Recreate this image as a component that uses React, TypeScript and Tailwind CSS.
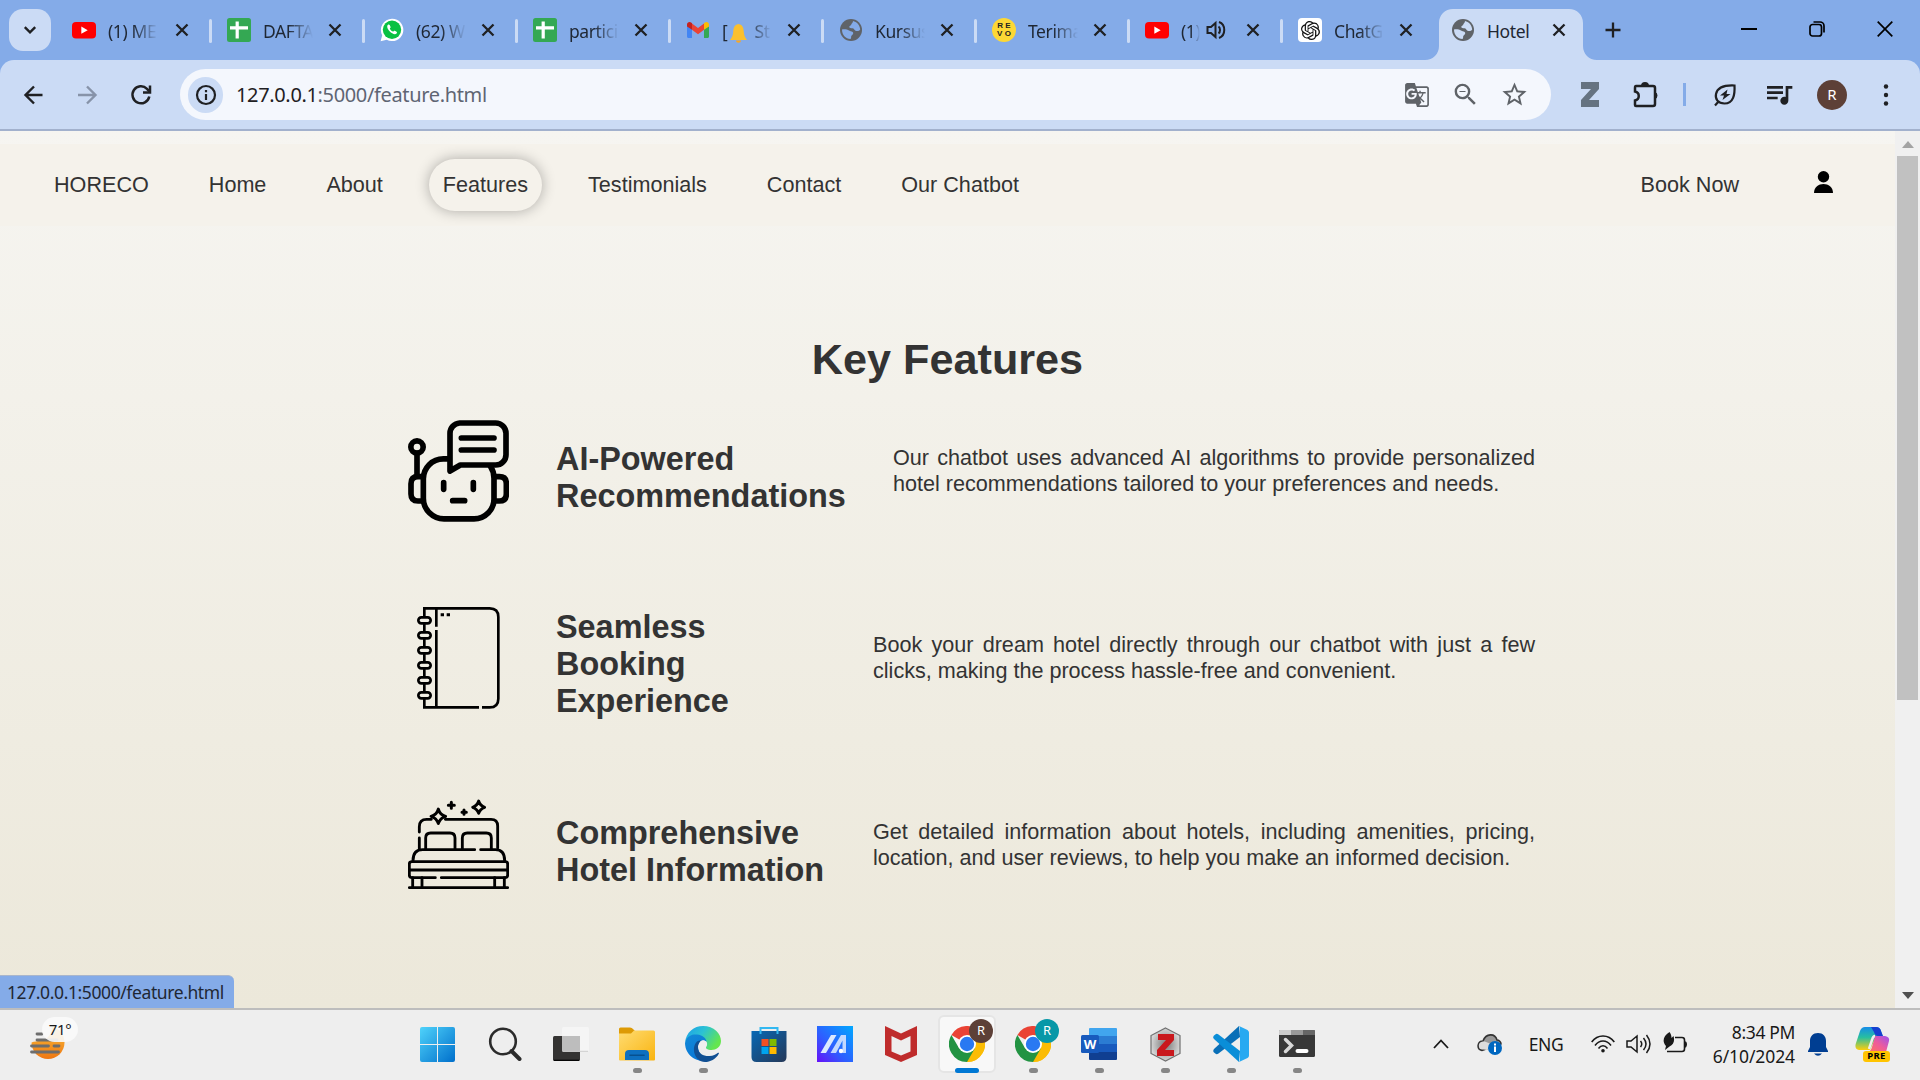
import React, { ReactNode } from "react";
import { MdGTranslate, MdZoomOut, MdStarBorder, MdQueueMusic } from "react-icons/md";
import { SiOpenai } from "react-icons/si";

const ui = "font-['Noto_Sans',sans-serif]";

const YouTube = () => (
  <svg className="h-6 w-6" viewBox="0 0 24 24">
    <rect y="4" width="24" height="16.4" rx="4" fill="#f00" />
    <path d="M9.3 8.6v7.2l6.4-3.6z" fill="#fff" />
  </svg>
);
const Sheet = () => (
  <svg className="h-6 w-6" viewBox="0 0 24 24">
    <rect width="24" height="24" rx="2.5" fill="#34a853" />
    <path d="M10.2 3.5v17M3 9.8h18" stroke="#fff" strokeWidth="3.2" />
  </svg>
);
const WhatsApp = () => (
  <svg className="h-6 w-6" viewBox="0 0 24 24">
    <path d="M12 .7a11.2 11.2 0 1 1-5.3 21L.6 23.2l1.6-6A11.2 11.2 0 0 1 12 .7z" fill="#fff" />
    <circle cx="12" cy="11.8" r="9.2" fill="#0ac143" />
    <path d="M8 6.8c-1.5 1.2-.7 4 1.6 6.5s5.600 3.700 6.900 2.200c.8-.9.6-1.500-.3-2l-1.500-.8c-.6-.3-.9.5-1.500.9-1.400-.3-3-1.900-3.400-3.200.5-.5 1-.8.8-1.400L9.700 7.100c-.3-.6-1-.8-1.700-.3z" fill="#fff" />
  </svg>
);
const Gmail = () => (
  <svg className="h-6 w-6" viewBox="0 0 24 24">
    <path d="M1 8v10.500c0 .9.6 1.500 1.500 1.500H6V11z" fill="#4285f4" />
    <path d="M23 8v10.500c0 .9-.6 1.500-1.500 1.500H18V11z" fill="#34a853" />
    <path d="M6 5.500v6.300l6 4.400 6-4.400V5.500l-6 4.600z" fill="#ea4335" />
    <path d="M1 6.500C1 4 3.800 3 5.500 4.800L6 5.300v6.500L1 8.400z" fill="#c5221f" />
    <path d="M23 6.500C23 4 20.200 3 18.500 4.800l-.5.5v6.500l5-3.400z" fill="#fbbc04" />
  </svg>
);
const Globe = ({ land }: { land: string }) => (
  <svg className="h-6 w-6" viewBox="0 0 24 24">
    <circle cx="12" cy="12" r="11" fill="#5f6368" />
    <path
      d="M14 3c3.500.800 7 4 7.200 8.500-1 1.500-3 2-4.700 1.200-1.300-.700-1.500-2.200-3-2.400-1.500-.200-3 .200-3.200-1.200-.200-1.300 1.700-1.300 2-2.500.200-1.200 1.700-1.600 1.700-3.600zM3 11.500c1.500-.500 5.500-.300 7 1 1.200 1 3.800.500 4.200 2.500.300 1.700-1.700 2-2 3.300-.2 1 .200 2-.700 2.700C6.500 20.800 3 17 3 11.500z"
      fill={land}
    />
  </svg>
);
const Revo = () => (
  <span className="flex h-6 w-6 flex-col items-center justify-center rounded-full bg-[#fdd835] font-['Liberation_Sans',sans-serif] text-[8px] font-bold leading-[8px] text-[#222]">
    <span>R E</span>
    <span>V O</span>
  </span>
);
const Gpt = () => (
  <span className="flex h-6 w-6 items-center justify-center rounded-[4px] bg-white">
    <SiOpenai className="h-[19px] w-[19px] text-[#111]" />
  </span>
);
const Close = () => (
  <svg className="h-[18px] w-[18px] shrink-0" viewBox="0 0 18 18">
    <path d="M3.500 3.500l11 11M14.500 3.500l-11 11" stroke="#1f2023" strokeWidth="2.300" />
  </svg>
);
const Sound = () => (
  <svg className="h-5 w-5" viewBox="0 0 20 20" fill="none" stroke="#1f2023" strokeWidth="2">
    <path d="M1.500 7v6h3.500l4.500 4V3L5 7z" />
    <path d="M12.500 6.500c2 1.500 2 5.500 0 7M13 2c7 2.500 7 13.500 0 16" />
  </svg>
);
const Bell = () => (
  <svg className="mx-[3px] inline-block h-[19px] w-[17px]" viewBox="0 0 17 19">
    <path d="M8.500 0C4 1 3.500 4 3.200 8S1.500 14 0 16h17c-1.500-2-2.900-4-3.200-8S13 1 8.500 0z" fill="#fbc02d" />
    <path d="M6 16.500h5c0 3-5 3-5 0z" fill="#f9a825" />
  </svg>
);

const tabs: { icon: ReactNode; label: ReactNode; sound?: boolean }[] = [
  { icon: <YouTube />, label: "(1) ME" },
  { icon: <Sheet />, label: "DAFTA" },
  { icon: <WhatsApp />, label: "(62) W" },
  { icon: <Sheet />, label: "partici" },
  { icon: <Gmail />, label: <>[<Bell /> St</> },
  { icon: <Globe land="#84abe8" />, label: "Kursus" },
  { icon: <Revo />, label: "Terima" },
  { icon: <YouTube />, label: "(1)", sound: true },
  { icon: <Gpt />, label: "ChatG" },
  { icon: <Globe land="#cbdbf5" />, label: "Hotel" },
];

function TabStrip() {
  return (
    <div className="flex h-[60px] bg-[#84abe8]">
      <button className="ml-[9px] mr-[7.500px] mt-[9px] flex h-[42px] w-[42px] items-center justify-center rounded-[14px] bg-[#cbdbf5]">
        <svg className="h-4 w-4" viewBox="0 0 16 16">
          <path d="M2.800 5.200L8 10.400l5.200-5.200" fill="none" stroke="#1f2023" strokeWidth="2.400" />
        </svg>
      </button>
      {tabs.map((t, i) => {
        const active = i === 9;
        return (
          <div
            key={i}
            className={`relative flex h-[60px] w-[153px] shrink-0 items-center ${i === 0 ? "pl-[13.500px]" : "pl-[15.500px]"}`}
          >
            {active && (
              <svg className="absolute -left-[10.500px] top-0 h-[60px] w-[172px]" viewBox="0 0 172 60">
                <path d="M0 60c8 0 14-6 14-14V23c0-8 6-14 14-14h116c8 0 14 6 14 14v23c0 8 6 14 14 14z" fill="#cbdbf5" />
              </svg>
            )}
            <span className="relative flex w-6">{t.icon}</span>
            <span
              className={`relative ml-[12px] overflow-hidden whitespace-nowrap pt-[2px] text-[17.500px] tracking-[-0.400px] text-[#1f2733] ${ui} ${
                t.sound
                  ? "w-[19px] [mask-image:linear-gradient(to_right,#000_50%,transparent)]"
                  : active
                    ? "w-[44px]"
                    : "w-[50px] [mask-image:linear-gradient(to_right,#000_50%,transparent)]"
              }`}
            >
              {t.label}
            </span>
            {t.sound && <span className="ml-[6px]"><Sound /></span>}
            <span className="relative ml-auto mr-[21px]"><Close /></span>
            {i < 8 && <span className="absolute right-0 top-[19px] h-6 w-[3px] rounded-sm bg-[#cbdbf5]" />}
          </div>
        );
      })}
      <svg className="ml-[16.500px] mt-[22px] h-4 w-4" viewBox="0 0 16 16">
        <path d="M8 .500v15M.500 8h15" stroke="#1f2023" strokeWidth="2.300" />
      </svg>
      <div className="ml-auto mr-[1px] flex h-[58px] items-center">
        <span className="flex w-[68px] justify-center"><span className="h-[2px] w-4 bg-black" /></span>
        <span className="flex w-[68px] justify-center">
          <svg className="h-4 w-4" viewBox="0 0 16 16" fill="none" stroke="#000" strokeWidth="1.700">
            <rect x="1" y="3.500" width="11.500" height="11.500" rx="2.500" />
            <path d="M4.500 1H11a4 4 0 0 1 4 4v6.500" />
          </svg>
        </span>
        <span className="flex w-[68px] justify-center">
          <svg className="h-4 w-4" viewBox="0 0 16 16"><path d="M.700.700l14.600 14.600M15.300.700L.700 15.300" stroke="#000" strokeWidth="1.700" /></svg>
        </span>
      </div>
    </div>
  );
}

function Toolbar() {
  return (
    <div className="bg-[#84abe8]">
      <div className="flex h-[69px] items-center rounded-t-[14px] bg-[#cbdbf5]">
        <svg className="ml-[22px] h-6 w-6" viewBox="0 0 24 24" fill="none" stroke="#1f2023" strokeWidth="2.400">
          <path d="M20.500 12H4M12 3.500L3.500 12l8.500 8.500" />
        </svg>
        <svg className="ml-[29px] h-6 w-6" viewBox="0 0 24 24" fill="none" stroke="#8793a9" strokeWidth="2.400">
          <path d="M3 12h17M12 3.500l8.500 8.500-8.500 8.500" />
        </svg>
        <svg className="ml-[30px] h-6 w-6" viewBox="0 0 24 24" fill="none" stroke="#1f2023" strokeWidth="2.500">
          <path d="M20.300 13.500A8.500 8.500 0 1 1 18 5.800l2.300 2.500" />
          <path d="M21 2.500v7h-7" />
        </svg>
        <div className="ml-[27px] flex h-[51px] w-[1371px] items-center rounded-full bg-[#f4f7fd]">
          <span className="ml-[8px] flex h-9 w-[35px] items-center justify-center rounded-full bg-[#cbdbf5]">
            <svg className="h-[22px] w-[22px]" viewBox="0 0 22 22">
              <circle cx="11" cy="11" r="9" fill="none" stroke="#1f2023" strokeWidth="2.200" />
              <path d="M11 10v6M11 6v2.200" stroke="#1f2023" strokeWidth="2.200" />
            </svg>
          </span>
          <span className={`ml-[13px] text-[20px] tracking-[-0.350px] text-[#5f6573] ${ui}`}>
            <span className="text-[#1f2023]">127.0.0.1</span>:5000/feature.html
          </span>
          <div className="ml-auto mr-[22px] flex items-center text-[#5f6368]">
            <MdGTranslate className="h-[26px] w-[26px]" />
            <MdZoomOut className="ml-[21px] h-[29px] w-[29px]" />
            <MdStarBorder className="ml-[20px] h-[29px] w-[29px]" />
          </div>
        </div>
        <svg className="ml-[30px] h-[25px] w-[18px]" viewBox="0 0 18 25">
          <path d="M0 0h18v7L8 18h10v7H0v-7L10 7H0z" fill="#667381" />
        </svg>
        <svg className="ml-[34px] h-[26px] w-[26px]" viewBox="0 0 26 26">
          <path d="M3 4h17q2 0 2 2v16q0 2-2 2H3q-1 0-1-1v-4.500c5-1 5-8 0-9V6q0-2 1-2z" fill="none" stroke="#1f2023" strokeWidth="2.500" />
          <path d="M8 4a4 4 0 0 1 8 0zM22 10a3.700 3.700 0 0 1 0 7z" fill="#1f2023" />
        </svg>
        <span className="ml-[24px] h-[23px] w-[3px] bg-[#84abe8]" />
        <svg className="ml-[27px] h-6 w-6" viewBox="0 0 24 24" fill="none" stroke="#1f2023" strokeWidth="2.200">
          <path d="M21.500 2.500c.5 9-1 18-10 18C5 20.500 2 16 3 11c1.500-7 8-9 18.500-8.500zM6 18l-4 4.500" />
          <path d="M14.500 6.500L7 12.500h4L9.500 17l8-6h-4z" fill="#1f2023" stroke="none" />
        </svg>
        <MdQueueMusic className="ml-[26px] h-[32px] w-[32px] -translate-y-[1px] text-[#1f2023]" />
        <span className={`ml-[22px] flex h-[30px] w-[30px] items-center justify-center rounded-full bg-[#5d4037] text-[15px] text-white ${ui}`}>R</span>
        <svg className="ml-[36px] h-[22px] w-[6px]" viewBox="0 0 6 22" fill="#1f2023">
          <circle cx="3" cy="2.500" r="2.200" />
          <circle cx="3" cy="11" r="2.200" />
          <circle cx="3" cy="19.500" r="2.200" />
        </svg>
      </div>
    </div>
  );
}

const Robot = () => (
  <svg className="h-[102px] w-[101px] shrink-0" viewBox="54 60 303 306" fill="none" stroke="#000" strokeWidth="17" strokeLinejoin="round" strokeLinecap="round">
    <circle cx="81" cy="141" r="18.500" />
    <path d="M81 160v66" />
    <path d="M173 176.500h-13a60 60 0 0 0-60 60v58a62 62 0 0 0 62 62h90a60 60 0 0 0 60-62v-60q0-20-10-34" />
    <path d="M98 230H84q-21 0-21 21v31q0 21 21 21h14M314 230h14q21 0 21 21v31q0 21-21 21h-14" />
    <path d="M209 69h108a31 31 0 0 1 31 31v64a31 31 0 0 1-31 31H211l-31 18V100a31 31 0 0 1 29-31z" />
    <path d="M214 114h98M214 150h98M161 248v20M250 248v20M188 302h36" />
  </svg>
);
const Notebook = () => (
  <svg className="h-[102px] w-[101px] shrink-0" viewBox="54 621 303 306" fill="none" stroke="#000" strokeWidth="8">
    <path d="M103 650v-25h196q26 0 26 26v245q0 26-26 26h-23M267 922H103v-25" />
    <path d="M139 625v55M139 690v232M103 672v24M103 717v23M103 762v23M103 807v23M103 852v23" />
    {[661, 706, 751, 796, 841, 886].map((y) => (
      <rect key={y} x="85" y={y - 9} width="37" height="18" rx="9" />
    ))}
    <path d="M152 644h10M170 644h10" strokeWidth="9" />
  </svg>
);
const Bed = () => (
  <svg className="h-[101px] w-[101px] shrink-0" viewBox="54 42 303 303" fill="none" stroke="#000" strokeWidth="8.500" strokeLinecap="round" strokeLinejoin="round">
    <path d="M145 87q5 18 22 22-17 5-22 22-5-17-22-22 17-4 22-22zM266 63q4 14 18 19-14 5-18 18-4-13-18-18 14-5 18-19z" />
    <path d="M184 67v18M175 76h18M222 90v13M216 96.500h13" strokeWidth="9" />
    <path d="M88 156v-16q0-22 22-22h14M166 118h137q20 0 20 20v66M88 174v32" />
    <path d="M107 208v-34q0-15 15-15h58q15 0 15 15v34M217 208v-34q0-15 15-15h57q15 0 15 15v34" />
    <path d="M254 209H98q-29 0-29 33M272 209h44q28 0 28 33" />
    <path d="M66 245h280q7 0 7 7v33q0 8-8 8H154M136 293H66q-8 0-8-8v-33q0-7 8-7M58 270h295" />
    <path d="M68 293v29M96 293v29M314 293v29M343 293v29M58 323h295" />
  </svg>
);

const features = [
  {
    icon: <Robot />,
    title: ["AI-Powered", "Recommendations"],
    text: "Our chatbot uses advanced AI algorithms to provide personalized hotel recommendations tailored to your preferences and needs.",
    width: "w-[642px]",
    offset: "mt-[15px]",
  },
  {
    icon: <Notebook />,
    title: ["Seamless", "Booking", "Experience"],
    text: "Book your dream hotel directly through our chatbot with just a few clicks, making the process hassle-free and convenient.",
    width: "w-[662px]",
    offset: "mt-[13px]",
  },
  {
    icon: <Bed />,
    title: ["Comprehensive", "Hotel Information"],
    text: "Get detailed information about hotels, including amenities, pricing, location, and user reviews, to help you make an informed decision.",
    width: "w-[662px]",
    offset: "mt-[15px]",
  },
];

const links = ["HORECO", "Home", "About", "Features", "Testimonials", "Contact", "Our Chatbot"];

function Page() {
  return (
    <div className="relative flex h-[877px] bg-[#f5f4f0] font-['Liberation_Sans',Arial,sans-serif] text-[#333]">
      <main className="flex-1 overflow-hidden bg-linear-to-b from-[#f6f5f1] to-[#ece8da] pt-[13px]">
        <nav className="flex h-[82px] items-center bg-[#f5f2eb] pl-[40.500px] text-[21.600px]">
          <div className="flex gap-[33px]">
            {links.map((l) => (
              <a
                key={l}
                className={`flex h-[52px] items-center rounded-[27px] px-[13.500px] ${l === "Features" ? "shadow-[0_0_14px_rgba(0,0,0,0.3)]" : ""}`}
              >
                {l}
              </a>
            ))}
          </div>
          <a className="ml-auto mr-[75px] pt-[1px]">Book Now</a>
          <svg className="mb-[6px] mr-[62px] h-[22px] w-[19px]" viewBox="0 0 19 22">
            <circle cx="9.500" cy="5.700" r="5.700" />
            <path d="M0 22c0-12 19-12 19 0z" />
          </svg>
        </nav>
        <h1 className="mt-[108px] text-center text-[43.200px] font-bold leading-[50px]">Key Features</h1>
        <div className="ml-[408px] mt-[-7px] w-[1127px]">
          {features.map((f) => (
            <section key={f.title[0]} className="flex h-[187px] items-center">
              {f.icon}
              <h2 className={`ml-[47px] flex-1 whitespace-nowrap text-[32.400px] font-bold leading-[37px] ${f.offset}`}>
                {f.title.map((line) => (
                  <span key={line} className="block">{line}</span>
                ))}
              </h2>
              <p className={`text-justify text-[21.600px] leading-[26px] ${f.width}`}>{f.text}</p>
            </section>
          ))}
        </div>
      </main>
      <div className="flex w-[25px] flex-col items-center bg-[#f0f0f0]">
        <svg className="mt-[10px] h-[7px] w-[12px]" viewBox="0 0 12 7"><path d="M0 7l6-7 6 7z" fill="#a3a3a3" /></svg>
        <div className="mt-[8px] h-[544px] w-[21px] bg-[#c1c1c1]" />
        <svg className="mb-[9px] mt-auto h-[7px] w-[12px]" viewBox="0 0 12 7"><path d="M0 0l6 7 6-7z" fill="#505050" /></svg>
      </div>
      <div className={`absolute bottom-0 left-0 flex h-[33px] w-[234px] items-center rounded-tr-[6px] border-t border-[#a9b6cc] bg-[#84abe8] pl-[7px] text-[17.500px] tracking-[-0.400px] text-[#1f2733] ${ui}`}>
        127.0.0.1:5000/feature.html
      </div>
    </div>
  );
}

const Chrome = ({ color }: { color: string }) => (
  <span className="relative">
    <svg className="h-9 w-9" viewBox="0 0 36 36">
      <path d="M18 18L2.400 9A18 18 0 0 1 33.600 9z" fill="#ea4335" />
      <path d="M18 18l15.600-9A18 18 0 0 1 18 36z" fill="#fbbc04" />
      <path d="M18 9h15.600A18 18 0 0 1 18 36l8-13.500z" fill="#fbbc04" />
      <path d="M2.400 9A18 18 0 0 0 18 36l7.800-13.500L10.200 22.500z" fill="#229342" />
      <circle cx="18" cy="18" r="9" fill="#fff" />
      <circle cx="18" cy="18" r="7.200" fill="#2979f2" />
    </svg>
    <span className={`absolute -right-[8px] -top-[7px] flex h-6 w-6 items-center justify-center rounded-full text-[13px] text-white ${ui} ${color}`}>R</span>
  </span>
);

const apps: { icon: ReactNode; dot?: boolean; active?: boolean }[] = [
  {
    icon: (
      <svg className="mr-[3px] h-[35px] w-[35px]" viewBox="0 0 35 35">
        <defs>
          <linearGradient id="win" x1="0" y1="0" x2="1" y2="1"><stop stopColor="#4fd3fb" /><stop offset="1" stopColor="#006fcb" /></linearGradient>
        </defs>
        <path d="M2 0h15v17H0V2q0-2 2-2zM18 0h15q2 0 2 2v15H18zM0 18h17v17H2q-2 0-2-2zM18 18h17v15q0 2-2 2H18z" fill="url(#win)" />
      </svg>
    ),
  },
  {
    icon: (
      <svg className="h-[34px] w-[34px]" viewBox="0 0 34 34" fill="none" stroke="#2b2b2b">
        <circle cx="15" cy="14.500" r="12.800" strokeWidth="2.600" />
        <path d="M23.500 24l8 8" strokeWidth="4" strokeLinecap="round" />
      </svg>
    ),
  },
  {
    icon: (
      <svg className="h-[35px] w-[36px]" viewBox="0 0 36 35">
        <rect y="9" width="27" height="25" rx="1.500" fill="#343332" />
        <path d="M1 33.300h25" stroke="#000" strokeWidth="1.200" />
        <rect x="9" width="27" height="24.500" rx="1.500" fill="#f5f5f5" />
        <path d="M9 9h18v15.500H9z" fill="#bdbdbd" />
        <path d="M10 24.300h25" stroke="#ccc" />
      </svg>
    ),
  },
  {
    dot: true,
    icon: (
      <svg className="h-[34px] w-[36px]" viewBox="0 0 36 34">
        <defs><linearGradient id="fold" x1="0" y1="0" x2="1" y2="1"><stop stopColor="#ffdc72" /><stop offset="1" stopColor="#f9b410" /></linearGradient></defs>
        <path d="M0 2Q0 .500 1.500.500H11q2 0 3 1.500l2 2-3 3H0z" fill="#dd9a05" />
        <path d="M0 6.500h12l3-3h19.500q1.500 0 1.500 1.500v27.500q0 1-1 1H1q-1 0-1-1z" fill="url(#fold)" />
        <path d="M6 33v-6q0-4 4-4h16q4 0 4 4v6z" fill="#0e70c0" />
        <path d="M11 28.300h14" stroke="#07508f" strokeWidth="1.600" strokeLinecap="round" />
      </svg>
    ),
  },
  {
    dot: true,
    icon: (
      <svg className="h-9 w-9" viewBox="0 0 36 36">
        <defs>
          <linearGradient id="edge1" x1="0" y1="0" x2="1" y2=".500"><stop stopColor="#1a9cec" /><stop offset=".500" stopColor="#2cc2d3" /><stop offset="1" stopColor="#64e64e" /></linearGradient>
          <linearGradient id="edge2" x1="0" y1="0" x2=".500" y2="1"><stop stopColor="#1389d6" /><stop offset="1" stopColor="#0676d8" /></linearGradient>
        </defs>
        <path d="M0 17C1 6 9 0 18 0c11 0 18 7.500 18 15 0 6-5 9-9.500 9-4 0-6-1.300-5.500-3 1.500-2 1.500-4 0-6C16 6 4 8 0 17z" fill="url(#edge1)" />
        <path d="M0 17C2 9 8 8 12 8.500c6 .500 9.500 4.500 9.500 7-5-3-8.500 1-8.500 5 0 8 7 13 14 12A18 18 0 0 1 0 17z" fill="url(#edge2)" />
        <path d="M16.500 14.500c-6 4-5 16 8 15.500 4 0 6-1.500 8.500-3.200.700-.400 1.200.300.800.900C31 33 25 36 20 36 9 35.500 6 21 12 15.500q2-1.500 4.500-1z" fill="#104f93" />
        <path d="M14.500 18c0-4 6-5.500 7-1 .700 3-1 4-.5 5.500.500 1 2.500 1.800 5 1.800-6 2.500-11.500-1-11.500-6.300z" fill="#eee" />
      </svg>
    ),
  },
  {
    icon: (
      <svg className="h-9 w-9" viewBox="0 0 36 36">
        <defs><linearGradient id="store" x1="0" y1="0" x2="1" y2="1"><stop stopColor="#0768b5" /><stop offset="1" stopColor="#253858" /></linearGradient></defs>
        <path d="M.500 5h35v26q0 5-5 5h-25q-5 0-5-5z" fill="url(#store)" />
        <path d="M9.500 8V2h17v6" fill="none" stroke="#32b8f1" strokeWidth="2" />
        <path d="M10.500 13h7v7h-7z" fill="#f25022" /><path d="M18.500 13h7v7h-7z" fill="#7fba00" />
        <path d="M10.500 21h7v7h-7z" fill="#00a4ef" /><path d="M18.500 21h7v7h-7z" fill="#ffb900" />
      </svg>
    ),
  },
  {
    icon: (
      <svg className="h-9 w-9" viewBox="0 0 36 36">
        <defs><linearGradient id="asus" x1="0" y1="1" x2="1" y2="0"><stop stopColor="#6710f8" /><stop offset=".400" stopColor="#305bff" /><stop offset="1" stopColor="#00a8ff" /></linearGradient></defs>
        <path d="M0 0h36v36H0z" fill="url(#asus)" />
        <path d="M3.500 27L14 9h5.500L9 27z" fill="#dce9ff" />
        <path d="M13.500 27L24 9h5v18h-3.500V14.500L19 27z" fill="#c3d8ff" />
        <circle cx="24" cy="25" r="2.200" fill="#fff" />
      </svg>
    ),
  },
  {
    icon: (
      <svg className="h-9 w-8" viewBox="0 0 32 36">
        <path fillRule="evenodd" d="M0 0l16 7.500L32 0v29l-16 7-16-7zM6.500 10v15.500l9.500 4 9.500-4V10L16 14.500z" fill="#bf2c2c" />
      </svg>
    ),
  },
  { active: true, icon: <Chrome color="bg-[#5d4037]" /> },
  { dot: true, icon: <Chrome color="bg-[#0797a7]" /> },
  {
    dot: true,
    icon: (
      <span className="relative">
        <svg className="h-9 w-9" viewBox="0 0 36 36">
          <path d="M9 2h26q1 0 1 1v7H8V3q0-1 1-1z" fill="#41a5ee" /><path d="M8 10h28v8H8z" fill="#2b7cd3" />
          <path d="M8 18h28v8H8z" fill="#185abd" /><path d="M8 26h28v7q0 1-1 1H9q-1 0-1-1z" fill="#103f91" />
          <rect y="9" width="18" height="18" rx="1.500" fill="#185abd" />
        </svg>
        <span className={`absolute left-0 top-[9px] w-[18px] text-center text-[13px] font-bold leading-[18px] text-white ${ui}`}>W</span>
      </span>
    ),
  },
  {
    dot: true,
    icon: (
      <svg className="h-[35px] w-[31px]" viewBox="0 0 31 35">
        <defs><radialGradient id="zot"><stop stopColor="#777" /><stop offset="1" stopColor="#d6d6d6" /></radialGradient></defs>
        <path d="M15.500 1L30 8.500v18L15.500 34 1 26.500v-18z" fill="url(#zot)" stroke="#717171" strokeWidth="1.200" />
        <path d="M8 7h16v6l-9 10h9v6H7v-6l9-10H8z" fill="#c9181d" />
      </svg>
    ),
  },
  {
    dot: true,
    icon: (
      <svg className="h-9 w-9" viewBox="0 0 36 36">
        <path d="M26 0L1 23q-1.500 2 0 3.500l2 1.500q1 .500 2.500-.500L27 11z" fill="#0a6fb7" />
        <path d="M26 36L1 13q-1.500-2 0-3.500L3 8q1-.500 2.500.500L27 25z" fill="#0a8ed8" />
        <path d="M26 0l8.500 4Q36 5 36 6.500v23q0 1.500-1.500 2.500L26 36q1-1 1-3V3q0-2-1-3z" fill="#27a9f1" />
      </svg>
    ),
  },
  {
    dot: true,
    icon: (
      <svg className="h-9 w-9" viewBox="0 0 36 36">
        <rect y="4" width="36" height="27" rx="1.500" fill="#383838" />
        <path d="M1 4h11v5H0V5q0-1 1-1z" fill="#ccc" /><path d="M12 4h12v5H12z" fill="#999" /><path d="M24 4h11q1 0 1 1v4H24z" fill="#666" />
        <path d="M6.500 13.500l6 6-6 6" fill="none" stroke="#d9d9d9" strokeWidth="3.500" strokeLinecap="round" />
        <path d="M18.500 25h9" stroke="#fff" strokeWidth="4" strokeLinecap="round" />
      </svg>
    ),
  },
];

function Taskbar() {
  return (
    <footer className={`flex h-[72px] border-t-2 border-[#bdbdbd] bg-[#eee] text-[#191919] ${ui}`}>
      <div className="w-[406px] pl-[30px] pt-[7px]">
        <div className="relative h-[44px] w-[50px]">
          <svg className="absolute left-0 top-[7px] h-[36px] w-[36px]" viewBox="0 0 36 36">
            <defs><linearGradient id="sun" x1="0" y1="0" x2="0" y2="1"><stop stopColor="#f9c13c" /><stop offset="1" stopColor="#ef7712" /></linearGradient></defs>
            <circle cx="18" cy="18.500" r="16.500" fill="url(#sun)" />
            <path d="M0 0h22c0 8-2 13-8 16-4 1-9 1-14 3z" fill="#eee" />
            <path d="M7 10h5M7 16h20M1.500 22h17M24 22h5M1.500 28h27" stroke="#6d6d6d" strokeWidth="2.800" strokeLinecap="round" />
          </svg>
          <span className="absolute left-[12px] top-0 flex h-[25px] w-[36px] items-center justify-center rounded-full bg-[#fafafa]/90 text-[15px] tracking-[-0.300px]">71°</span>
        </div>
      </div>
      {apps.map((a, i) => (
        <div key={i} className="relative flex h-[68px] w-[66px] items-center justify-center">
          {a.active && <span className="absolute left-[4px] top-[5px] h-[58px] w-[58px] rounded-[6px] border-2 border-[#e5e5e5] bg-[#f8f8f8]" />}
          <span className="relative flex">{a.icon}</span>
          {a.dot && <span className="absolute bottom-[5px] left-[28.500px] h-[5px] w-[9px] rounded-full bg-[#868686]" />}
          {a.active && <span className="absolute bottom-[5px] left-[21px] h-[5px] w-6 rounded-full bg-[#0078d4]" />}
        </div>
      ))}
      <div className="ml-[87px] flex h-[68px] items-center">
        <span className="flex w-12 justify-center">
          <svg className="h-[10px] w-[16px]" viewBox="0 0 16 10"><path d="M1 9l7-7.500L15 9" fill="none" stroke="#191919" strokeWidth="1.800" /></svg>
        </span>
        <span className="flex w-12 justify-center">
          <svg className="h-[21px] w-[25px]" viewBox="0 0 25 21">
            <path d="M5 16.500C-1 15 .500 7 6 7c3-8 12-8 14-1 2 0 4 2 4 4z" fill="#999" stroke="#333" strokeWidth="1.600" />
            <path d="M3 15C0 11 3 6 9 8l8 3-7 5z" fill="#ddd" />
            <circle cx="18" cy="14" r="7" fill="#0067c0" />
            <path d="M18 12.500V18M18 9.500v2" stroke="#fff" strokeWidth="2" />
          </svg>
        </span>
        <span className="w-[66px] text-center text-[17.500px] tracking-[-0.4px]">ENG</span>
        <span className="ml-[6px] flex w-9 justify-center">
          <svg className="h-[18px] w-[24px]" viewBox="0 0 24 18" fill="none" stroke="#191919" strokeWidth="1.600">
            <path d="M.700 7c6-8 16.600-8 22.600 0M4 10.500c4.500-6 11.500-6 16 0M7.500 13.500c2.700-3.600 6.300-3.600 9 0" />
            <circle cx="12" cy="15.800" r="1.800" fill="#191919" stroke="none" />
          </svg>
        </span>
        <span className="flex w-[35px] justify-center">
          <svg className="h-[20px] w-[25px]" viewBox="0 0 25 20" fill="none" stroke="#191919" strokeWidth="1.500">
            <path d="M1 7v6h4l6 5V2L5 7zM14.500 7q2.500 3 0 6M17.500 4q5 6 0 12M20.500 1q7 9 0 18" />
          </svg>
        </span>
        <span className="flex w-[38px] justify-center pb-1">
          <svg className="h-[21px] w-[25px]" viewBox="0 0 25 21">
            <path d="M12 5.500h7q2.500 0 2.500 2.500v9q0 2.500-2.500 2.500H4" fill="none" stroke="#191919" strokeWidth="1.600" />
            <path d="M22 9.500h1q2 2.500 0 6h-1zM6.500 0c1.500 2 2 4 2 6l2-2c1.500 5 0 9-4 10.500L2 18l1-4C-1 10 0 4 6.500 0z" fill="#191919" />
          </svg>
        </span>
        <div className="w-[101px] whitespace-nowrap text-right text-[17.500px] leading-[24px] tracking-[-0.100px]">
          <div className="tracking-[-0.350px]">8:34 PM</div>
          <div>6/10/2024</div>
        </div>
        <span className="ml-[5px] flex w-9 justify-center">
          <svg className="h-[23px] w-[20px]" viewBox="0 0 20 23" fill="#003e92">
            <path d="M10 0c-5 0-8 3.500-8 8v6l-2 4v1h20v-1l-2-4V8c0-4.500-3-8-8-8zM6 20.500h8q-4 4.500-8 0z" />
          </svg>
        </span>
        <span className="relative ml-[19px] flex h-9 w-[36px]">
          <svg className="h-[34px] w-[35px]" viewBox="0 0 35 34">
            <defs>
              <linearGradient id="cop1" x1="0" y1="0" x2="0" y2="1"><stop stopColor="#168ce8" /><stop offset=".450" stopColor="#27bfa0" /><stop offset="1" stopColor="#ffce0c" /></linearGradient>
              <linearGradient id="cop2" x1="0" y1="1" x2="1" y2="0"><stop stopColor="#ff765c" /><stop offset=".500" stopColor="#ee5b9b" /><stop offset="1" stopColor="#9b52ef" /></linearGradient>
            </defs>
            <path d="M10 1h11q4 0 5 4l2 6-8 2-5 11H4q-5-1-3-7L5 5q1.500-4 5-4z" fill="url(#cop1)" />
            <path d="M16 1h5q4 0 5 4l2 5h-5q-3 0-4-4z" fill="#153fd0" />
            <path d="M20 10h10q5 1 4 5l-3 11H13q3-1 4-5l2-7q.500-3 1-4z" fill="url(#cop2)" />
            <path d="M20 10q-2 0-3 4l-3 9" fill="none" stroke="#eee" strokeWidth="2.500" />
          </svg>
          <span className="absolute bottom-0 left-[8px] flex h-[11px] w-[27px] items-center justify-center rounded-[3px] bg-[#ffc400] text-[9.500px] font-bold tracking-[0.4px] text-black">PRE</span>
        </span>
      </div>
    </footer>
  );
}

export default function App() {
  return (
    <div className="h-[1080px] w-[1920px] overflow-hidden">
      <TabStrip />
      <Toolbar />
      <div className="h-[2px] bg-[#a2b1cd]" />
      <Page />
      <Taskbar />
    </div>
  );
}
